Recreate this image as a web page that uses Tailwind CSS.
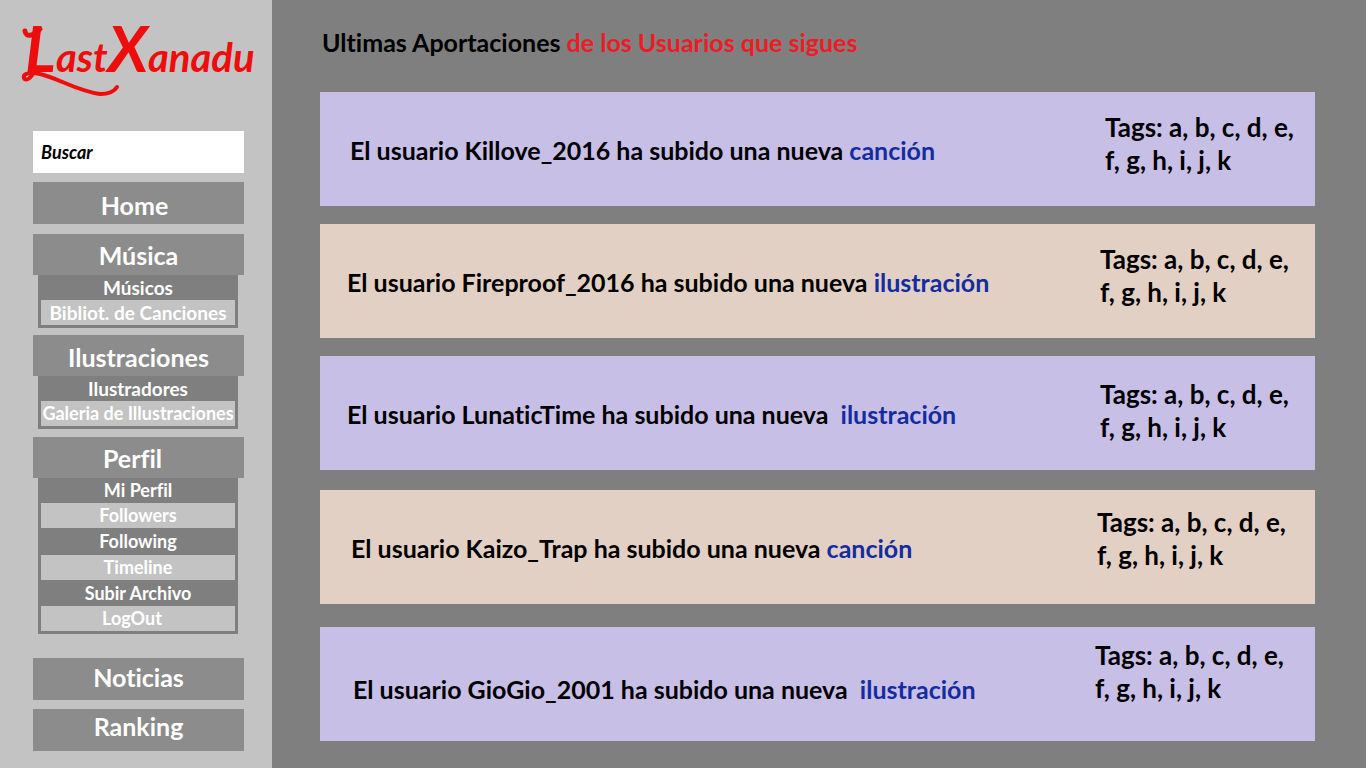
<!DOCTYPE html>
<html lang="es">
<head>
<meta charset="utf-8">
<meta name="viewport" content="width=device-width, initial-scale=1">
<title>LastXanadu</title>
<script src="https://cdn.jsdelivr.net/npm/@tailwindcss/browser@4"></script>
</head>
<body class="flex min-h-screen bg-[#7f7f7f] font-['Lato',sans-serif] font-bold text-black [font-variant-ligatures:none]">
<aside class="w-[272px] shrink-0 bg-[#c3c3c3] pr-7 pl-[33px]">
  <a href="#" aria-label="LastXanadu" class="relative -ml-3 block h-[131px] w-60 pt-[18px] whitespace-nowrap text-[#ee0c0c] italic">
    <span class="flex items-baseline pl-1 text-[40px] leading-[60px]"><span class="text-[64px]">L</span><span>ast</span><span class="text-[64px]">X</span><span>anadu</span></span>
    <svg class="absolute top-0 left-0 h-[131px] w-60" viewBox="21 0 240 131" fill="none" stroke="#ee0c0c" stroke-linecap="round" aria-hidden="true">
      <path d="M25 31C26 38 33 36 40 29" stroke-width="5"/>
      <path d="M34 70C32 78 26 82 24 78C22 73 32 72 40 74C58 78 77 91 100 94C108 94 114 92 117 87" stroke-width="4"/>
    </svg>
  </a>
  <form><input type="search" aria-label="Buscar" placeholder="Buscar" class="block h-[42px] w-full bg-white px-2 text-lg font-bold italic outline-none placeholder:text-black placeholder:opacity-100"></form>
  <nav class="text-center text-white">
    <a href="#" class="mt-[9px] block h-[42px] bg-[#8c8c8c] pt-1 pr-2 text-[25px] leading-[38px]">Home</a>
    <a href="#" class="mt-[10px] block h-[41px] bg-[#8c8c8c] text-[25px] leading-[42px]">Música</a>
    <div class="mr-[6px] ml-[5px] border-x-3 border-b-3 border-[#7f7f7f] bg-[#7f7f7f] text-[19px] leading-[25px] whitespace-nowrap">
      <a href="#" class="block">Músicos</a>
      <a href="#" class="block bg-[#c3c3c3]">Bibliot. de Canciones</a>
    </div>
    <a href="#" class="mt-[7px] block h-[41px] bg-[#8c8c8c] text-[25px] leading-[44px]">Ilustraciones</a>
    <div class="mr-[6px] ml-[5px] border-x-3 border-b-3 border-[#7f7f7f] bg-[#7f7f7f] text-[19px] leading-[25px] whitespace-nowrap">
      <a href="#" class="block">Ilustradores</a>
      <a href="#" class="block bg-[#c3c3c3] text-lg leading-[25px]">Galeria de Illustraciones</a>
    </div>
    <a href="#" class="mt-2 block h-[41px] bg-[#8c8c8c] pr-3 text-[25px] leading-[42px]">Perfil</a>
    <div class="mr-[6px] ml-[5px] border-x-3 border-b-3 border-[#7f7f7f] bg-[#7f7f7f] text-lg">
      <a href="#" class="block leading-[25px]">Mi Perfil</a>
      <a href="#" class="block bg-[#c3c3c3] leading-[25px]">Followers</a>
      <a href="#" class="block leading-[27px]">Following</a>
      <a href="#" class="block bg-[#c3c3c3] leading-[25px]">Timeline</a>
      <a href="#" class="block leading-[26px]">Subir Archivo</a>
      <a href="#" class="block bg-[#c3c3c3] pr-3 leading-[25px]">LogOut</a>
    </div>
    <a href="#" class="mt-6 block h-[42px] bg-[#8c8c8c] text-[25px] leading-[38px]">Noticias</a>
    <a href="#" class="mt-[9px] block h-[42px] bg-[#8c8c8c] text-[25px] leading-[34px]">Ranking</a>
  </nav>
</aside>
<main class="flex-1 pr-[51px] pl-12 text-[25px] leading-[33px]">
  <h1 class="pt-[26px] pb-[33px] pl-[2px]">Ultimas Aportaciones <span class="text-[#ed1c24]">de los Usuarios que sigues</span></h1>
  <article class="flex h-[114px] justify-between bg-[#c8bfe7] pl-[30px]">
    <p class="pt-[42px]">El usuario Killove_2016 ha subido una nueva <a href="#" class="text-[#142ca0]">canción</a></p>
    <p class="w-[210px] shrink-0 pt-[19px] text-[26px]">Tags: a, b, c, d, e,<br>f, g, h, i, j, k</p>
  </article>
  <article class="mt-[18px] flex h-[114px] justify-between bg-[#e2d0c4] pl-[27px]">
    <p class="pt-[42px]">El usuario Fireproof_2016 ha subido una nueva <a href="#" class="text-[#142ca0]">ilustración</a></p>
    <p class="w-[215px] shrink-0 pt-[19px] text-[26px]">Tags: a, b, c, d, e,<br>f, g, h, i, j, k</p>
  </article>
  <article class="mt-[18px] flex h-[114px] justify-between bg-[#c8bfe7] pl-[27px]">
    <p class="pt-[42px]">El usuario LunaticTime ha subido una nueva&nbsp; <a href="#" class="text-[#142ca0]">ilustración</a></p>
    <p class="w-[215px] shrink-0 pt-[22px] text-[26px]">Tags: a, b, c, d, e,<br>f, g, h, i, j, k</p>
  </article>
  <article class="mt-5 flex h-[114px] justify-between bg-[#e2d0c4] pl-[31px]">
    <p class="pt-[42px]">El usuario Kaizo_Trap ha subido una nueva <a href="#" class="text-[#142ca0]">canción</a></p>
    <p class="w-[218px] shrink-0 pt-4 text-[26px]">Tags: a, b, c, d, e,<br>f, g, h, i, j, k</p>
  </article>
  <article class="mt-[23px] flex h-[114px] justify-between bg-[#c8bfe7] pl-[33px]">
    <p class="pt-[46px]">El usuario GioGio_2001 ha subido una nueva&nbsp; <a href="#" class="text-[#142ca0]">ilustración</a></p>
    <p class="w-[220px] shrink-0 pt-3 text-[26px]">Tags: a, b, c, d, e,<br>f, g, h, i, j, k</p>
  </article>
</main>
</body>
</html>
